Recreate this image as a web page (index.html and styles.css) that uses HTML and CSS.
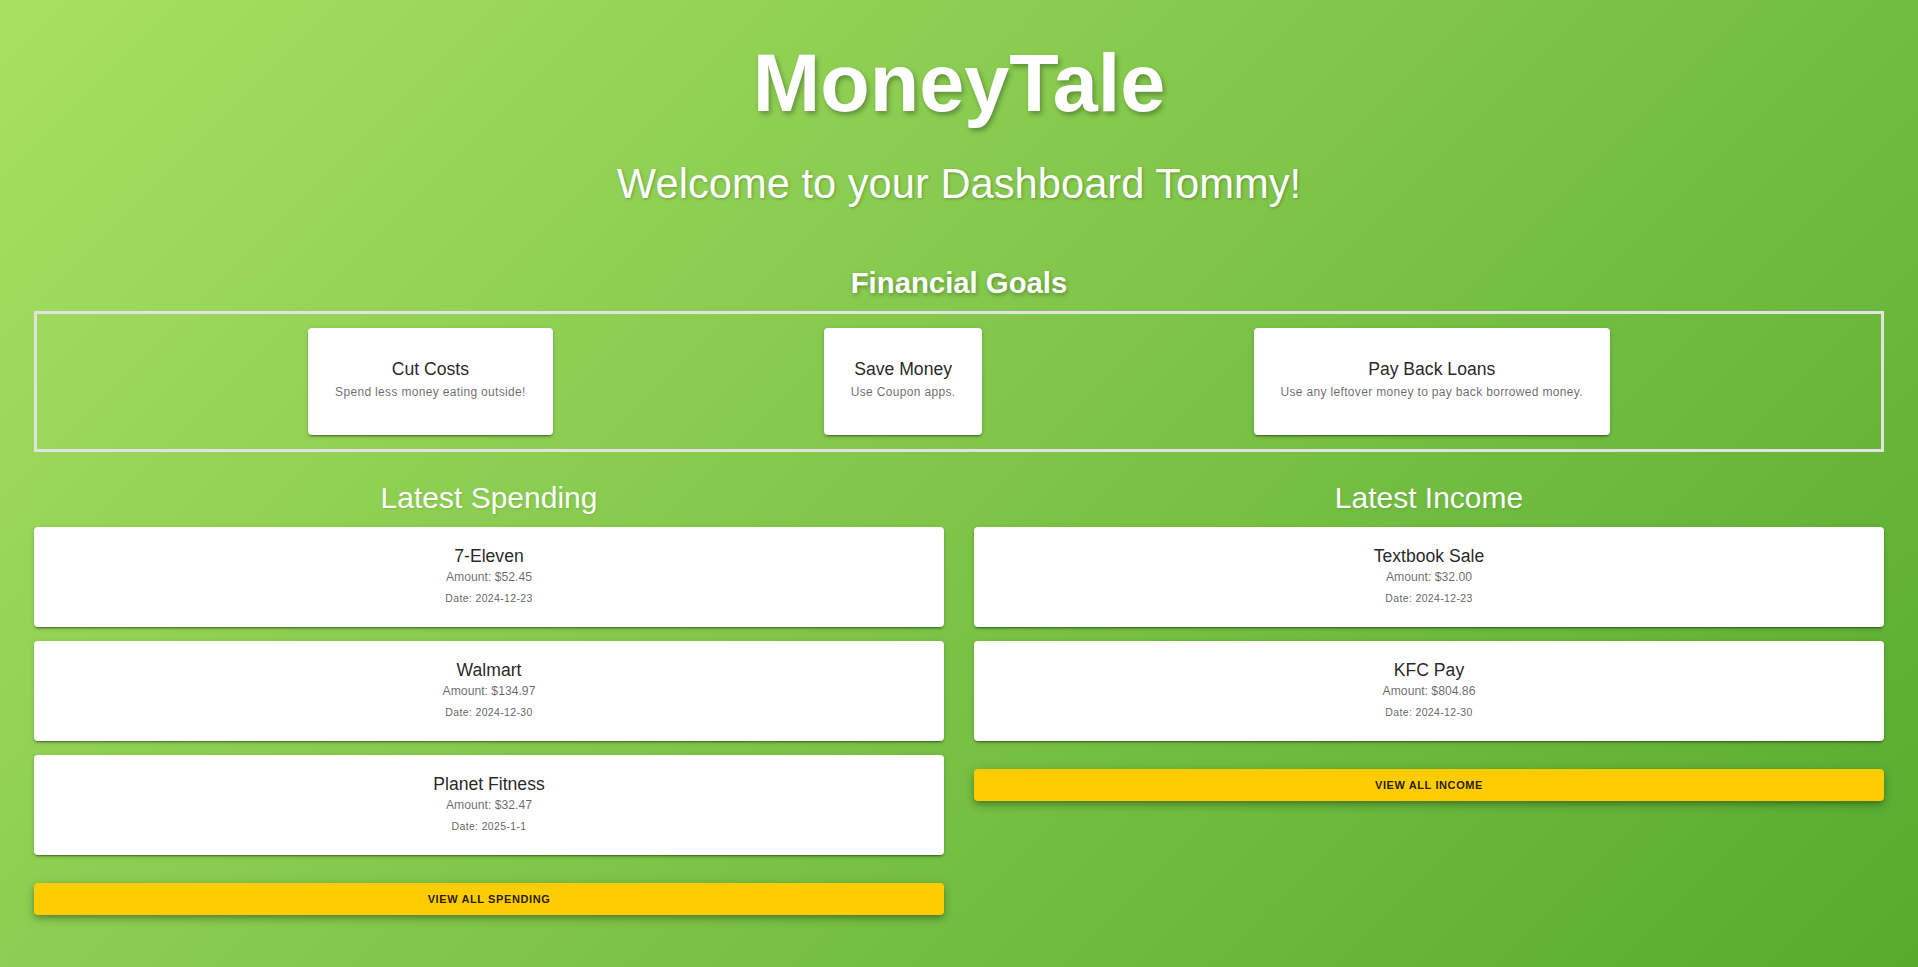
FILE: index.html
```html
<!DOCTYPE html>
<html lang="en">
<head>
<meta charset="utf-8">
<title>MoneyTale Dashboard</title>
<link rel="stylesheet" href="styles.css">
</head>
<body>
<main class="page">
  <h1 class="brand">MoneyTale</h1>
  <h2 class="welcome">Welcome to your Dashboard Tommy!</h2>

  <h3 class="goals-title">Financial Goals</h3>
  <section class="goals">
    <div class="goal-card">
      <div class="goal-name">Cut Costs</div>
      <div class="goal-desc">Spend less money eating outside!</div>
    </div>
    <div class="goal-card">
      <div class="goal-name">Save Money</div>
      <div class="goal-desc">Use Coupon apps.</div>
    </div>
    <div class="goal-card">
      <div class="goal-name">Pay Back Loans</div>
      <div class="goal-desc">Use any leftover money to pay back borrowed money.</div>
    </div>
  </section>

  <section class="columns">
    <div class="column">
      <h3 class="col-title">Latest Spending</h3>
      <div class="list">
        <div class="tx-card">
          <div class="tx-name">7-Eleven</div>
          <div class="tx-amount">Amount: $52.45</div>
          <div class="tx-date">Date: 2024-12-23</div>
        </div>
        <div class="tx-card">
          <div class="tx-name">Walmart</div>
          <div class="tx-amount">Amount: $134.97</div>
          <div class="tx-date">Date: 2024-12-30</div>
        </div>
        <div class="tx-card">
          <div class="tx-name">Planet Fitness</div>
          <div class="tx-amount">Amount: $32.47</div>
          <div class="tx-date">Date: 2025-1-1</div>
        </div>
        <button class="view-btn">View All Spending</button>
      </div>
    </div>
    <div class="column">
      <h3 class="col-title">Latest Income</h3>
      <div class="list">
        <div class="tx-card">
          <div class="tx-name">Textbook Sale</div>
          <div class="tx-amount">Amount: $32.00</div>
          <div class="tx-date">Date: 2024-12-23</div>
        </div>
        <div class="tx-card">
          <div class="tx-name">KFC Pay</div>
          <div class="tx-amount">Amount: $804.86</div>
          <div class="tx-date">Date: 2024-12-30</div>
        </div>
        <button class="view-btn">View All Income</button>
      </div>
    </div>
  </section>
</main>
</body>
</html>
```

FILE: styles.css
```css
* { box-sizing: border-box; }

html, body {
  margin: 0;
  padding: 0;
  height: 100%;
}

body {
  font-family: "Liberation Sans", Arial, Helvetica, sans-serif;
  background: linear-gradient(135deg, #a8e063 0%, #56ab2f 100%);
  background-attachment: fixed;
  min-height: 100vh;
  color: rgba(0, 0, 0, 0.87);
}

.page {
  padding: 37px 34px 40px;
  display: flex;
  flex-direction: column;
  align-items: stretch;
}

.brand {
  margin: 0;
  text-align: center;
  font-size: 81px;
  line-height: 93px;
  font-weight: 700;
  color: #fff;
  text-shadow: 2px 3px 5px rgba(0, 0, 0, 0.3);
}

.welcome {
  margin: 30px 0 0;
  text-align: center;
  font-size: 41.7px;
  line-height: 48px;
  font-weight: 400;
  color: #fff;
  text-shadow: 1px 1px 3px rgba(0, 0, 0, 0.25);
}

.goals-title {
  margin: 58px 0 0;
  text-align: center;
  font-size: 29.3px;
  line-height: 33px;
  font-weight: 700;
  color: #fff;
  text-shadow: 1px 2px 4px rgba(0, 0, 0, 0.3);
}

.goals {
  margin-top: 12px;
  border: 3px solid #e2e2e2;
  padding: 14px 0;
  display: flex;
  justify-content: space-evenly;
  align-items: stretch;
}

.goal-card {
  background: #fff;
  border-radius: 4px;
  height: 107px;
  padding: 28px 27px 0;
  text-align: center;
  box-shadow: 0 3px 1px -2px rgba(0, 0, 0, 0.25), 0 2px 2px 0 rgba(0, 0, 0, 0.16), 0 1px 5px 0 rgba(0, 0, 0, 0.12);
}

.goal-name {
  font-size: 17.6px;
  line-height: 26px;
  color: rgba(0, 0, 0, 0.87);
}

.goal-desc {
  font-size: 12px;
  line-height: 20px;
  letter-spacing: 0.33px;
  color: rgba(0, 0, 0, 0.6);
}

.columns {
  margin-top: 29px;
  display: grid;
  grid-template-columns: 1fr 1fr;
  column-gap: 30px;
  align-items: start;
}

.column {
  display: flex;
  flex-direction: column;
}

.col-title {
  margin: 0 0 12px;
  text-align: center;
  font-size: 30px;
  line-height: 34px;
  font-weight: 400;
  color: #fff;
  text-shadow: 1px 1px 2px rgba(0, 0, 0, 0.12);
}

.list {
  display: flex;
  flex-direction: column;
  gap: 14px;
}

.tx-card {
  background: #fff;
  border-radius: 4px;
  height: 100px;
  padding: 16px 16px 0;
  text-align: center;
  box-shadow: 0 3px 1px -2px rgba(0, 0, 0, 0.25), 0 2px 2px 0 rgba(0, 0, 0, 0.16), 0 1px 5px 0 rgba(0, 0, 0, 0.12);
}

.tx-name {
  font-size: 17.6px;
  line-height: 26px;
  color: rgba(0, 0, 0, 0.87);
}

.tx-amount {
  font-size: 12.2px;
  line-height: 17px;
  color: rgba(0, 0, 0, 0.6);
}

.tx-date {
  margin-top: 4px;
  font-size: 10.5px;
  line-height: 16px;
  letter-spacing: 0.35px;
  color: rgba(0, 0, 0, 0.65);
}

.view-btn {
  margin-top: 14px;
  height: 32px;
  border: none;
  border-radius: 4px;
  background: #ffcc00;
  color: rgba(0, 0, 0, 0.87);
  font-family: "Liberation Sans", Arial, Helvetica, sans-serif;
  font-size: 11px;
  font-weight: 700;
  letter-spacing: 0.6px;
  text-transform: uppercase;
  cursor: pointer;
  box-shadow: 0 3px 5px -1px rgba(0, 0, 0, 0.2), 0 5px 8px 0 rgba(0, 0, 0, 0.14), 0 1px 12px 0 rgba(0, 0, 0, 0.1);
}
```
